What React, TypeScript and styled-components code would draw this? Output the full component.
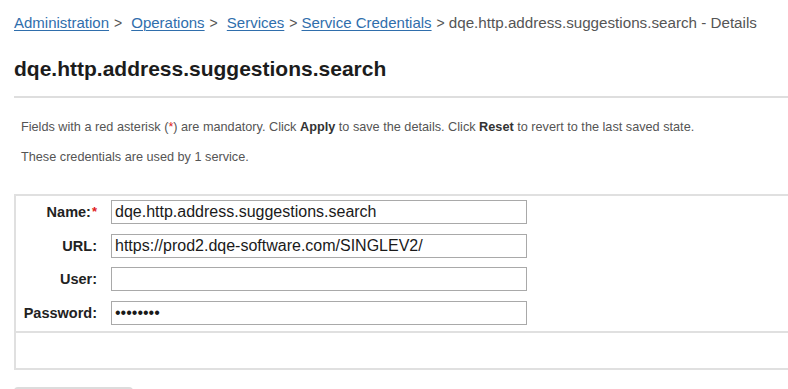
import { FC, Fragment } from 'react';
import styled, { createGlobalStyle } from 'styled-components';

const GlobalStyle = createGlobalStyle`
  html, body {
    margin: 0;
    padding: 0;
    background: #ffffff;
    overflow: hidden;
  }

  body {
    font-family: 'Liberation Sans', Arial, Helvetica, sans-serif;
    color: #222222;
  }
`;

const Page = styled.div`
  box-sizing: border-box;
  width: 100%;
  padding-left: 14px;
`;

const Breadcrumb = styled.nav`
  padding-top: 14px;
  font-size: 15px;
  line-height: 17px;
  color: #555555;
  white-space: nowrap;
`;

const Crumb = styled.a`
  color: #2f6eac;
  text-decoration: underline;
  text-underline-offset: 2px;
  text-decoration-thickness: 1px;
`;

const Sep = styled.span<{ $wide?: boolean }>`
  font-size: 14px;
  margin: 0 ${({ $wide }) => ($wide ? '9px' : '4px')} 0 5px;
`;

const Current = styled.span`
  font-size: 15.2px;
`;

const Title = styled.h1`
  margin: 25px 0 0;
  font-size: 21px;
  line-height: 24px;
  font-weight: bold;
  color: #1c1c1c;
`;

const Divider = styled.div`
  margin-top: 15px;
  border-top: 2px solid #dedede;
`;

const Info = styled.div`
  box-sizing: border-box;
  height: 96px;
  padding: 22px 0 0 7px;
  font-size: 12.7px;
  color: #555555;
`;

const Para = styled.p<{ $top: number }>`
  margin: ${({ $top }) => $top}px 0 0;
  line-height: 14px;
`;

const Red = styled.span`
  color: #e02020;
`;

const Strong = styled.b`
  color: #333333;
`;

const FormBox = styled.div`
  border: 2px solid #e0e0e0;
  border-right: none;
`;

const Fields = styled.div`
  display: grid;
  grid-template-columns: 81px 416px;
  column-gap: 14px;
  row-gap: 9.5px;
  padding: 4px 0 6px 0;
  border-bottom: 2px solid #e0e0e0;
`;

const Label = styled.label`
  display: flex;
  align-items: center;
  justify-content: flex-end;
  font-size: 14.5px;
  font-weight: bold;
  color: #222222;
  white-space: nowrap;
`;

const Asterisk = styled.span`
  color: #e02020;
  font-size: 13px;
  align-self: flex-start;
  margin-top: 4px;
  margin-left: 1px;
`;

const Input = styled.input`
  box-sizing: border-box;
  height: 24px;
  width: 416px;
  margin: 0;
  padding: 0 3px;
  border: 1.5px solid #a9a9a9;
  border-radius: 0;
  font-family: 'Liberation Sans', Arial, Helvetica, sans-serif;
  font-size: 16px;
  color: #1a1a1a;
  background: #ffffff;
  outline: none;
`;

const Footer = styled.div`
  height: 35px;
`;

const Button = styled.div`
  margin-top: 17px;
  width: 119px;
  height: 20px;
  background: #dcdcdc;
  border-radius: 4px;
`;

interface Field {
  label: string;
  value: string;
  required?: boolean;
  type?: string;
}

const fields: Field[] = [
  { label: 'Name:', value: 'dqe.http.address.suggestions.search', required: true },
  { label: 'URL:', value: 'https://prod2.dqe-software.com/SINGLEV2/' },
  { label: 'User:', value: '' },
  { label: 'Password:', value: 'secret12', type: 'password' },
];

const App: FC = () => {
  return (
    <>
      <GlobalStyle />
      <Page>
        <Breadcrumb>
          <Crumb>Administration</Crumb>
          <Sep $wide>&gt;</Sep>
          <Crumb>Operations</Crumb>
          <Sep $wide>&gt;</Sep>
          <Crumb>Services</Crumb>
          <Sep>&gt;</Sep>
          <Crumb>Service Credentials</Crumb>
          <Sep>&gt;</Sep>
          <Current>dqe.http.address.suggestions.search - Details</Current>
        </Breadcrumb>
        <Title>dqe.http.address.suggestions.search</Title>
        <Divider />
        <Info>
          <Para $top={0}>
            Fields with a red asterisk (<Red>*</Red>) are mandatory. Click{' '}
            <Strong>Apply</Strong> to save the details. Click <Strong>Reset</Strong> to
            revert to the last saved state.
          </Para>
          <Para $top={16}>These credentials are used by 1 service.</Para>
        </Info>
        <FormBox>
          <Fields>
            {fields.map((field) => (
              <Fragment key={field.label}>
                <Label>
                  {field.label}
                  {field.required && <Asterisk>*</Asterisk>}
                </Label>
                <Input type={field.type ?? 'text'} defaultValue={field.value} />
              </Fragment>
            ))}
          </Fields>
          <Footer />
        </FormBox>
        <Button />
      </Page>
    </>
  );
};

export default App;
